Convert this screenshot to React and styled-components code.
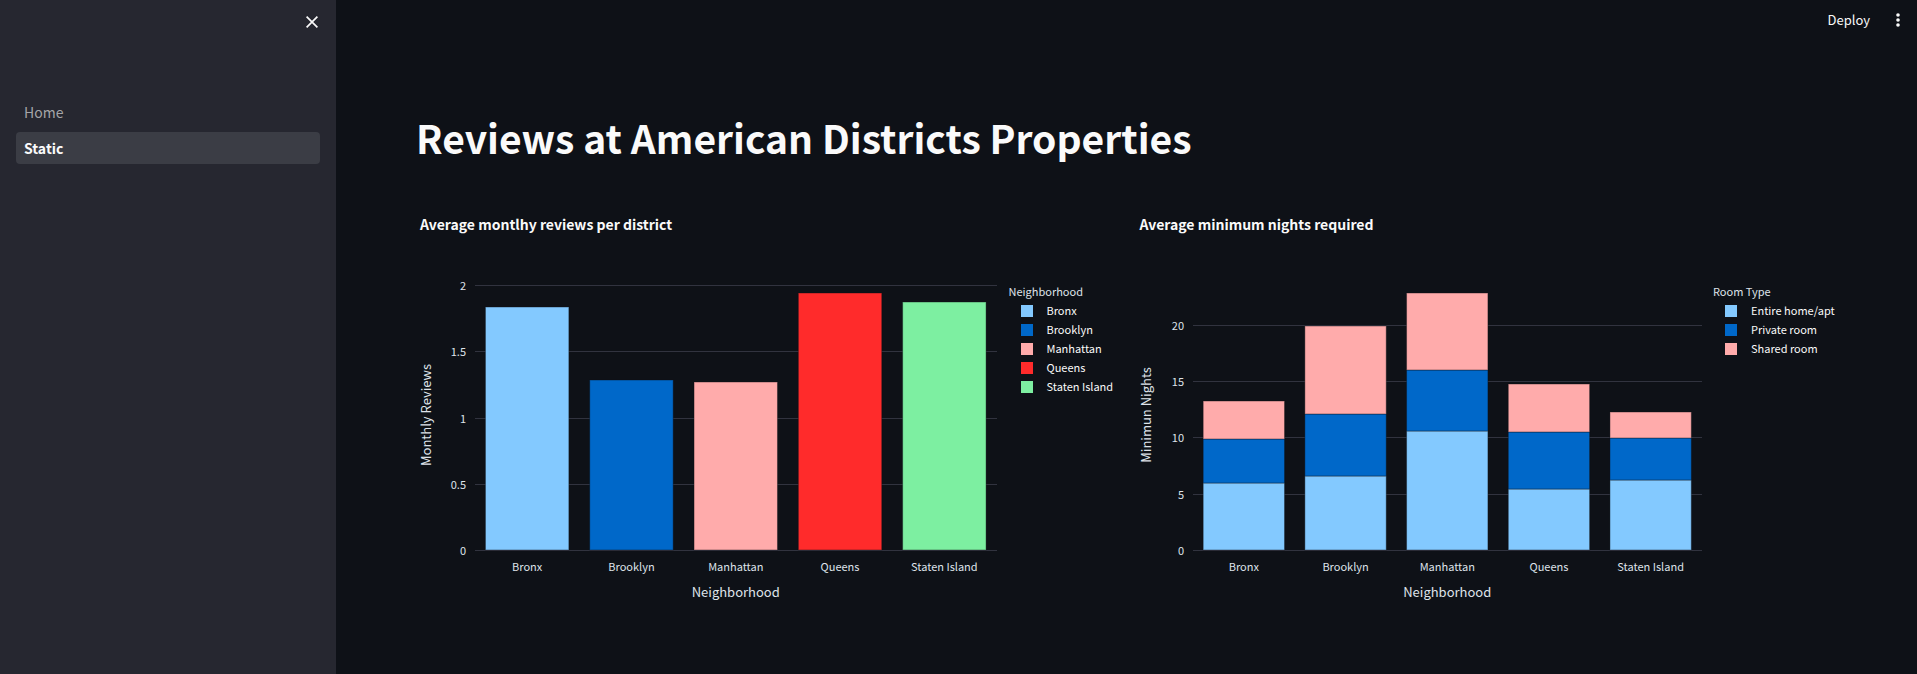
import React from "react";
import styled, { createGlobalStyle } from "styled-components";

const colors = {
  page: "#0e1117",
  sidebar: "#262730",
  active: "#3b3d45",
  text: "#fafafa",
  muted: "#a5a5a8",
  label: "#dfe3ea",
  grid: "#31333f",
};

const GlobalStyle = createGlobalStyle`
  *, *::before, *::after { box-sizing: border-box; }
  body {
    margin: 0;
    background: ${colors.page};
    color: ${colors.text};
    font-family: "Noto Sans CJK SC", "Noto Sans", sans-serif;
    font-size: 14px;
  }
`;

const Layout = styled.div`
  display: flex;
  min-height: 100vh;
`;

const Sidebar = styled.aside`
  flex: none;
  width: 336px;
  padding: 8px 16px;
  background: ${colors.sidebar};
`;

const SidebarTop = styled.div`
  display: flex;
  justify-content: flex-end;
  height: 88px;
  padding-top: 4px;
`;

const IconButton = styled.button`
  display: flex;
  align-items: center;
  justify-content: center;
  width: 16px;
  height: 20px;
  padding: 0;
  border: 0;
  background: none;
  color: ${colors.text};
  cursor: pointer;
`;

const Nav = styled.nav`
  display: flex;
  flex-direction: column;
  gap: 4px;
`;

const NavLink = styled.a`
  padding: 0 8px;
  border-radius: 4px;
  background: ${(p) => (p.$active ? colors.active : "transparent")};
  color: ${(p) => (p.$active ? colors.text : colors.muted)};
  font-weight: ${(p) => (p.$active ? 700 : 400)};
  line-height: 32px;
  text-decoration: none;
`;

const Main = styled.main`
  flex: 1;
  min-width: 0;
`;

const Toolbar = styled.header`
  display: flex;
  align-items: center;
  justify-content: flex-end;
  gap: 20px;
  height: 40px;
  padding-right: 11px;
`;

const DeployButton = styled.button`
  padding: 0;
  border: 0;
  background: none;
  color: ${colors.text};
  font-family: inherit;
  font-size: 13px;
  line-height: 20px;
  cursor: pointer;
`;

const Content = styled.div`
  padding: 71px 80px 24px;
`;

const PageTitle = styled.h1`
  margin: 0 0 36px;
  font-size: 39px;
  font-weight: 700;
  line-height: 53px;
`;

const Columns = styled.div`
  display: grid;
  grid-template-columns: repeat(2, minmax(0, 1fr));
  gap: 18px;
`;

const Figure = styled.figure`
  margin: 0;
`;

const FigureTitle = styled.figcaption`
  padding: 0 4px;
  font-weight: 700;
  line-height: 48px;
`;

const FigureBody = styled.div`
  display: flex;
  gap: 12px;
  padding-top: 32px;
  padding-left: ${(p) => p.$axisWidth}px;
`;

const Plot = styled.svg`
  flex: 1;
  min-width: 0;
  height: 346px;
  overflow: visible;
  fill: ${colors.label};
  font-size: 11px;
`;

const GridLine = styled.line`
  stroke: ${colors.grid};
  stroke-width: 1;
  shape-rendering: crispEdges;
`;

const Bar = styled.rect`
  stroke: ${colors.page};
  stroke-opacity: 0.4;
`;

const AxisTitle = styled.text`
  font-size: 13px;
  text-anchor: middle;
`;

const Legend = styled.div`
  flex: none;
  width: ${(p) => p.$width}px;
  color: ${colors.label};
  font-size: 11px;
  line-height: 19px;
  white-space: nowrap;
`;

const LegendTitle = styled.div`
  padding-top: 2px;
`;

const LegendList = styled.ul`
  margin: 0;
  padding: 0 0 0 12px;
  list-style: none;
`;

const LegendItem = styled.li`
  display: flex;
  align-items: center;
  gap: 14px;
  color: ${colors.text};
`;

const Swatch = styled.span`
  width: 12px;
  height: 12px;
  background: ${(p) => p.$color};
`;

const PLOT_HEIGHT = 270;

const palette = {
  sky: "#83c9ff",
  blue: "#0068c9",
  pink: "#ffabab",
  red: "#ff2b2b",
  green: "#7defa1",
};

const reviews = {
  title: "Average montlhy reviews per district",
  yTitle: "Monthly Reviews",
  axisWidth: 59,
  max: 2.04,
  ticks: [0, 0.5, 1, 1.5, 2],
  bars: [
    { name: "Bronx", parts: [[1.836, palette.sky]] },
    { name: "Brooklyn", parts: [[1.284, palette.blue]] },
    { name: "Manhattan", parts: [[1.272, palette.pink]] },
    { name: "Queens", parts: [[1.943, palette.red]] },
    { name: "Staten Island", parts: [[1.875, palette.green]] },
  ],
  legendTitle: "Neighborhood",
  legendWidth: 109,
  legend: [
    ["Bronx", palette.sky],
    ["Brooklyn", palette.blue],
    ["Manhattan", palette.pink],
    ["Queens", palette.red],
    ["Staten Island", palette.green],
  ],
};

const stack = (a, b, c) => [
  [a, palette.sky],
  [b, palette.blue],
  [c, palette.pink],
];

const nights = {
  title: "Average minimum nights required",
  yTitle: "Minimun Nights",
  axisWidth: 57,
  max: 23.95,
  ticks: [0, 5, 10, 15, 20],
  bars: [
    { name: "Bronx", parts: stack(5.97, 3.85, 3.38) },
    { name: "Brooklyn", parts: stack(6.54, 5.53, 7.79) },
    { name: "Manhattan", parts: stack(10.53, 5.47, 6.78) },
    { name: "Queens", parts: stack(5.39, 5.11, 4.23) },
    { name: "Staten Island", parts: stack(6.24, 3.67, 2.31) },
  ],
  legendTitle: "Room Type",
  legendWidth: 124,
  legend: [
    ["Entire home/apt", palette.sky],
    ["Private room", palette.blue],
    ["Shared room", palette.pink],
  ],
};

function Chart({ data }) {
  const band = 100 / data.bars.length;
  const y = (value) => Math.round(PLOT_HEIGHT * (1 - value / data.max));

  return (
    <Figure>
      <FigureTitle>{data.title}</FigureTitle>
      <FigureBody $axisWidth={data.axisWidth}>
        <Plot role="img" aria-label={data.title}>
          {data.ticks.map((tick) => (
            <g key={tick}>
              <GridLine x1="0" x2="100%" y1={y(tick)} y2={y(tick)} />
              <text x="-9" y={y(tick) + 5} textAnchor="end">
                {tick}
              </text>
            </g>
          ))}
          {data.bars.map((bar, i) => {
            let base = 0;
            return (
              <g key={bar.name}>
                {bar.parts.map(([value, color]) => {
                  const bottom = y(base);
                  base += value;
                  return (
                    <Bar
                      key={color}
                      x={`${band * (i + 0.1)}%`}
                      y={y(base)}
                      width={`${band * 0.8}%`}
                      height={bottom - y(base)}
                      fill={color}
                    />
                  );
                })}
                <text
                  x={`${band * (i + 0.5)}%`}
                  y={PLOT_HEIGHT + 21}
                  textAnchor="middle"
                >
                  {bar.name}
                </text>
              </g>
            );
          })}
          <AxisTitle x="50%" y={PLOT_HEIGHT + 47}>
            Neighborhood
          </AxisTitle>
          <AxisTitle
            transform={`translate(${15 - data.axisWidth} ${PLOT_HEIGHT / 2}) rotate(-90)`}
          >
            {data.yTitle}
          </AxisTitle>
        </Plot>
        <Legend $width={data.legendWidth}>
          <LegendTitle>{data.legendTitle}</LegendTitle>
          <LegendList>
            {data.legend.map(([name, color]) => (
              <LegendItem key={name}>
                <Swatch $color={color} />
                {name}
              </LegendItem>
            ))}
          </LegendList>
        </Legend>
      </FigureBody>
    </Figure>
  );
}

export default function App() {
  return (
    <>
      <GlobalStyle />
      <Layout>
        <Sidebar>
          <SidebarTop>
            <IconButton type="button" aria-label="Close sidebar">
              <svg width="12" height="12" viewBox="0 0 12 12" fill="none" stroke="currentColor" strokeWidth="1.7">
                <path d="M0.6 0.6 11.4 11.4M11.4 0.6 0.6 11.4" />
              </svg>
            </IconButton>
          </SidebarTop>
          <Nav>
            <NavLink href="#home">Home</NavLink>
            <NavLink href="#static" $active aria-current="page">
              Static
            </NavLink>
          </Nav>
        </Sidebar>
        <Main>
          <Toolbar>
            <DeployButton type="button">Deploy</DeployButton>
            <IconButton type="button" aria-label="Main menu">
              <svg width="4" height="14" viewBox="0 0 4 14" fill="currentColor">
                <circle cx="2" cy="2" r="1.8" />
                <circle cx="2" cy="7" r="1.8" />
                <circle cx="2" cy="12" r="1.8" />
              </svg>
            </IconButton>
          </Toolbar>
          <Content>
            <PageTitle>Reviews at American Districts Properties</PageTitle>
            <Columns>
              <Chart data={reviews} />
              <Chart data={nights} />
            </Columns>
          </Content>
        </Main>
      </Layout>
    </>
  );
}
